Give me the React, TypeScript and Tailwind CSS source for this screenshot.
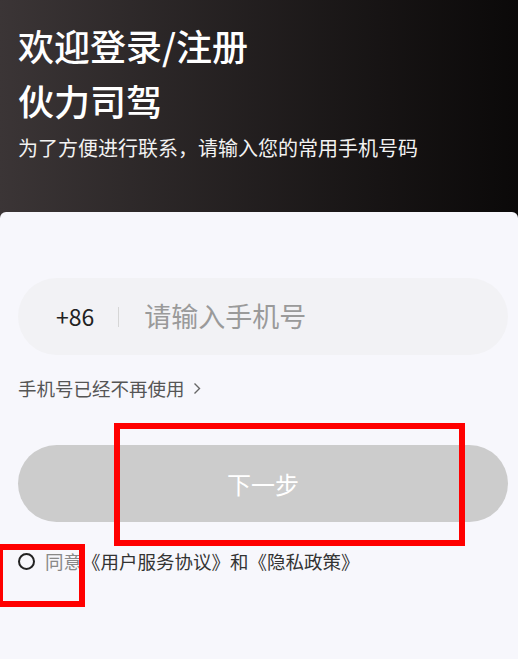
export default function App() {
  return (
    <div className="relative min-h-screen bg-[#f7f7fc] font-['Noto_Sans_CJK_SC','Noto_Sans',sans-serif]">
      {/* Header */}
      <div className="h-[220px] bg-gradient-to-r from-[#3b3536] to-[#0b0909] px-[18px] pt-[18px] text-white">
        <h1 className="text-[36px] font-medium leading-[55px]">欢迎登录/注册</h1>
        <h2 className="text-[36px] font-medium leading-[55px]">伙力司驾</h2>
        <p className="mt-[5px] text-[20px] leading-[30px] text-[#f2f2f2]">
          为了方便进行联系，请输入您的常用手机号码
        </p>
      </div>

      {/* Card */}
      <div className="relative -mt-[8px] rounded-t-[6px] bg-[#f7f7fc] pb-10 pl-[18px] pr-[10px]">
        <div className="h-[8px]" />
        <div className="mt-[58px] flex h-[77px] items-center rounded-full bg-[#f2f2f5] pl-[38px]">
          <span className="text-[23px] text-[#222]">+86</span>
          <span className="ml-[24px] h-[20px] w-px bg-[#d6d6d6]" />
          <input
            type="tel"
            placeholder="请输入手机号"
            className="ml-[25px] min-w-0 flex-1 bg-transparent text-[27px] text-[#333] outline-none placeholder:text-[#9a9a9a]"
          />
        </div>

        <div className="mt-[20px] flex items-center text-[18.5px] leading-[26px] text-[#555]">
          手机号已经不再使用
          <svg className="ml-[8px]" width="8" height="13" viewBox="0 0 8 13" fill="none">
            <path d="M1.5 1.5 6.5 6.5 1.5 11.5" stroke="#666" strokeWidth="1.4" />
          </svg>
        </div>

        <button className="mt-[44px] flex h-[77px] w-full items-center justify-center rounded-full bg-[#cccccc] text-[24px] text-white">
          下一步
        </button>

        <div className="mt-[26px] flex items-center text-[18.5px] leading-[26px]">
          <span className="h-[17px] w-[17px] rounded-full border-2 border-[#222]" />
          <span className="ml-[10px] text-[#888]">同意</span>
          <span className="text-[#333]">《用户服务协议》和《隐私政策》</span>
        </div>
      </div>

      {/* Annotation boxes */}
      <div className="pointer-events-none absolute left-[114px] top-[423px] h-[123px] w-[351px] border-[6px] border-[#ff0000]" />
      <div className="pointer-events-none absolute left-[-3px] top-[544px] h-[63px] w-[88px] border-[6px] border-[#ff0000]" />
    </div>
  );
}
